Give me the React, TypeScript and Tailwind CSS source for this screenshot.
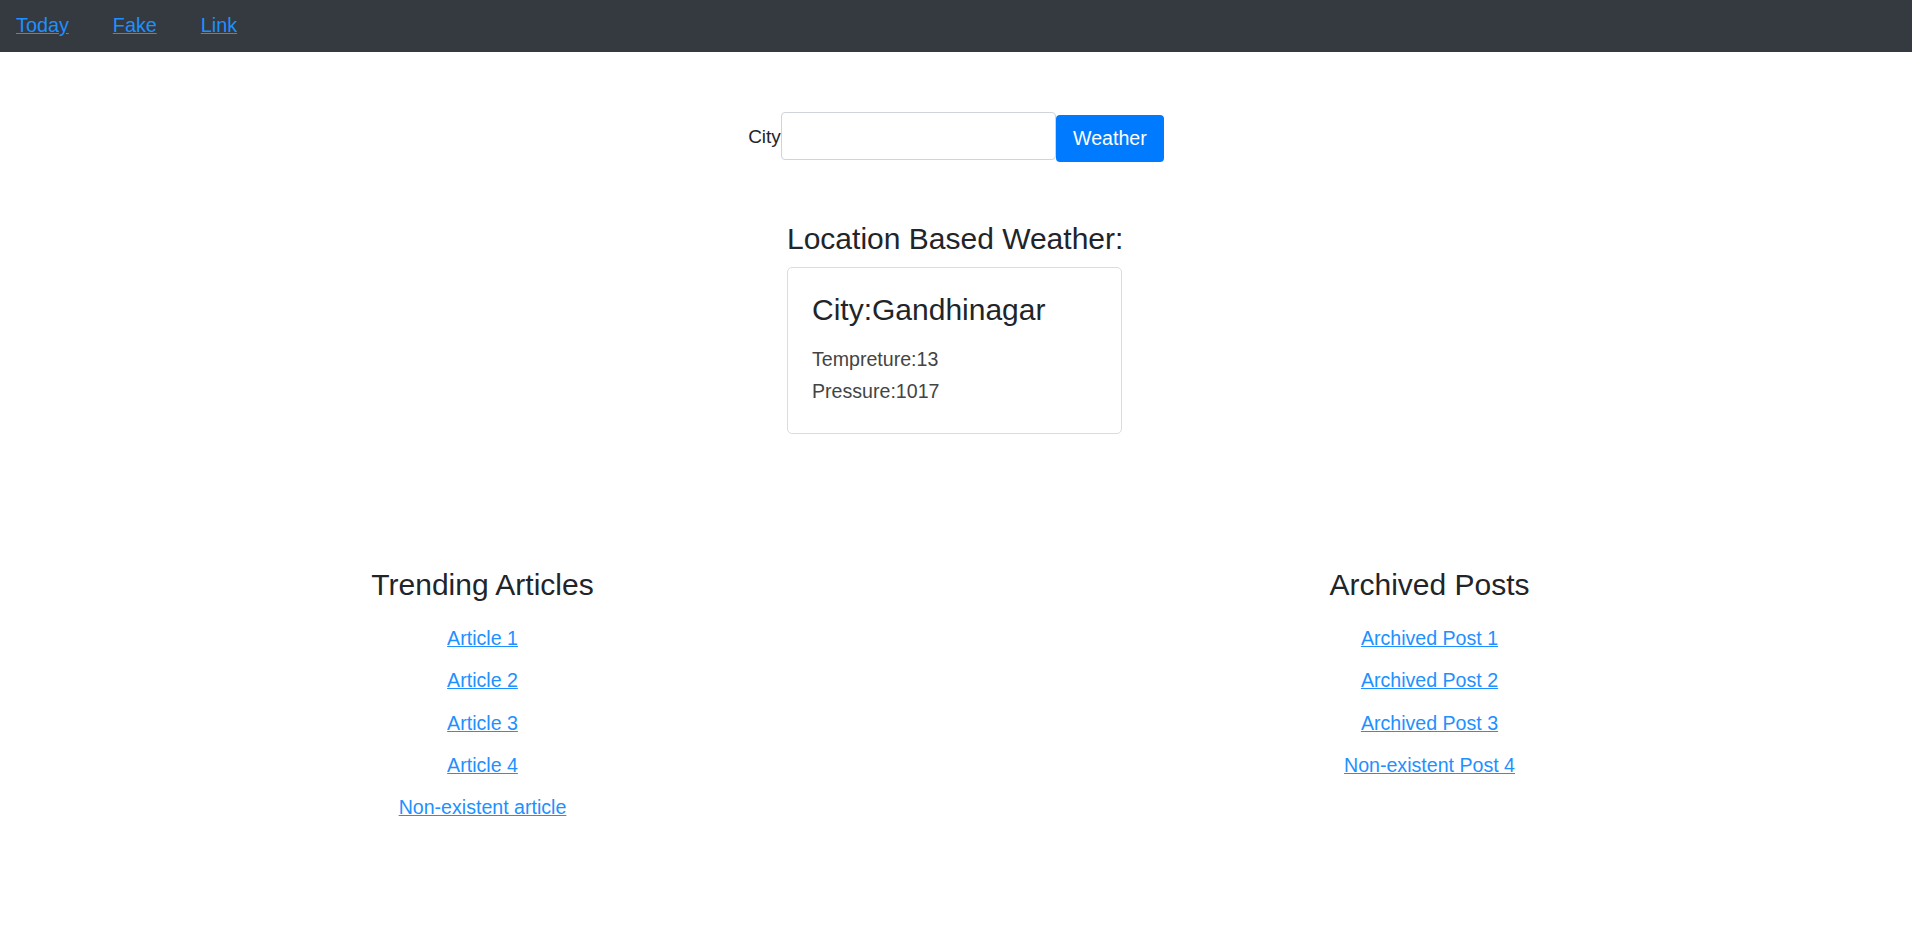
import React from "react";

const font = { fontFamily: '"Liberation Sans", Arial, sans-serif' };

export default function App() {
  const articles = ["Article 1", "Article 2", "Article 3", "Article 4", "Non-existent article"];
  const posts = ["Archived Post 1", "Archived Post 2", "Archived Post 3", "Non-existent Post 4"];
  return (
    <div className="min-h-screen bg-white text-[#212529]" style={font}>
      <nav className="h-[52px] bg-[#343a40] flex items-center px-4 gap-[44px] text-[19.8px]">
        <a href="#" className="text-[#1e90ff] underline">Today</a>
        <a href="#" className="text-[#1e90ff] underline">Fake</a>
        <a href="#" className="text-[#1e90ff] underline">Link</a>
      </nav>

      <div className="flex justify-center pt-[60px]">
        <div className="flex items-start">
          <label className="mt-[13px] text-[19px] leading-[24px] text-[#212529]">City</label>
          <input
            type="text"
            className="w-[275px] h-[48px] border border-[#ced4da] rounded-[4px] bg-white outline-none px-3"
          />
          <button className="mt-[3px] w-[108px] h-[47px] bg-[#007bff] text-white rounded-[4px] text-[19.6px] leading-[23px] flex items-center justify-center">
            Weather
          </button>
        </div>
      </div>

      <div className="flex justify-center mt-[59px]">
        <div className="w-[335px] mr-[3px]">
          <h3 className="text-[30px] leading-[36px] text-[#212529] whitespace-nowrap">Location Based Weather:</h3>
          <div className="mt-[10px] border border-[#dcdcdc] rounded-[5px] px-6 pt-6 pb-[26px]">
            <h4 className="text-[30px] leading-[36px] text-[#212529] whitespace-nowrap">City:Gandhinagar</h4>
            <div className="mt-[16px] text-[19.6px] leading-[31.5px] text-[#444]">
              <p>Tempreture:13</p>
              <p>Pressure:1017</p>
            </div>
          </div>
        </div>
      </div>

      <div className="w-[1894px] mx-auto mt-[133px] grid grid-cols-2">
        <div className="flex flex-col items-center">
          <h3 className="text-[30px] leading-[36px] text-[#212529]">Trending Articles</h3>
          <div className="mt-[14px] flex flex-col items-center text-[19.6px] leading-[42.25px]">
            {articles.map((a) => (
              <a key={a} href="#" className="text-[#1e90ff] underline">{a}</a>
            ))}
          </div>
        </div>
        <div className="flex flex-col items-center">
          <h3 className="text-[30px] leading-[36px] text-[#212529]">Archived Posts</h3>
          <div className="mt-[14px] flex flex-col items-center text-[19.6px] leading-[42.25px]">
            {posts.map((a) => (
              <a key={a} href="#" className="text-[#1e90ff] underline">{a}</a>
            ))}
          </div>
        </div>
      </div>
    </div>
  );
}
